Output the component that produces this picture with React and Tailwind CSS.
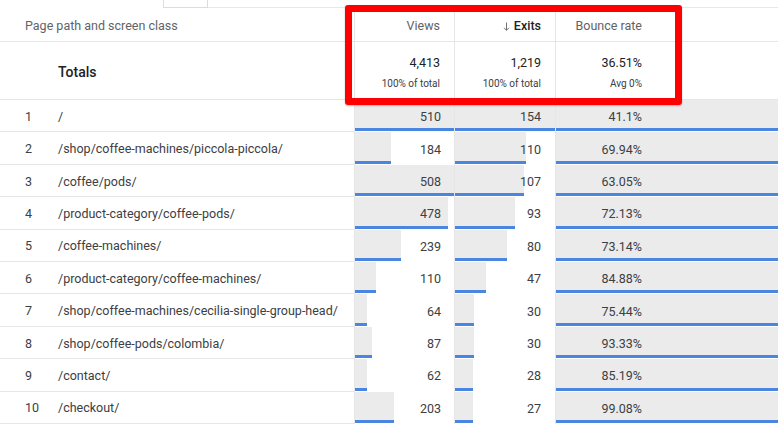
import React from "react";

const rows = [
  { n: 1, path: "/", views: 510, exits: 154, bounce: "41.1%" },
  { n: 2, path: "/shop/coffee-machines/piccola-piccola/", views: 184, exits: 110, bounce: "69.94%" },
  { n: 3, path: "/coffee/pods/", views: 508, exits: 107, bounce: "63.05%" },
  { n: 4, path: "/product-category/coffee-pods/", views: 478, exits: 93, bounce: "72.13%" },
  { n: 5, path: "/coffee-machines/", views: 239, exits: 80, bounce: "73.14%" },
  { n: 6, path: "/product-category/coffee-machines/", views: 110, exits: 47, bounce: "84.88%" },
  { n: 7, path: "/shop/coffee-machines/cecilia-single-group-head/", views: 64, exits: 30, bounce: "75.44%" },
  { n: 8, path: "/shop/coffee-pods/colombia/", views: 87, exits: 30, bounce: "93.33%" },
  { n: 9, path: "/contact/", views: 62, exits: 28, bounce: "85.19%" },
  { n: 10, path: "/checkout/", views: 203, exits: 27, bounce: "99.08%" },
];

function BarCell({ width, children, className = "" }) {
  return (
    <div className={"relative h-full " + className}>
      <div
        className="absolute left-0 top-0 bottom-[1px] bg-[#ebebeb] border-b-[3px] border-[#4a86e0]"
        style={{ width }}
      />
      <div className="relative h-full flex items-center justify-end pr-[14px] pt-[3px] w-[100px]">
        {children}
      </div>
    </div>
  );
}

export default function App() {
  return (
    <div className="relative w-[778px] h-[430px] bg-white overflow-hidden font-['Roboto',sans-serif] text-[12.5px] text-[#3c4043]">
      {/* top strip */}
      <div className="flex h-[8px]">
        <div className="w-[163px]" />
        <div className="w-[45px] border-x border-b border-[#dadce0]" />
        <div className="flex-1 border-b border-[#e8e8e8]" />
      </div>

      {/* header */}
      <div className="grid grid-cols-[355px_100px_101px_222px] h-[34px] border-b border-[#e6e6e6]">
        <div className="flex items-center pl-[25px] pt-[4px] text-[#5f6368] border-r border-[#e6e6e6]">
          Page path and screen class
        </div>
        <div className="flex items-center justify-end pr-[14px] pt-[4px] text-[#5f6368] border-r border-[#e6e6e6]">
          Views
        </div>
        <div className="flex items-center justify-end pr-[14px] pt-[4px] font-medium text-[#202124] border-r border-[#e6e6e6] gap-[4px]">
          <svg width="7" height="9" viewBox="0 0 7 9" fill="none" stroke="#5f6368" strokeWidth="0.9">
            <path d="M3.5 0.5v7.8M1 5.8l2.5 2.5 2.5-2.5" />
          </svg>
          Exits
        </div>
        <div className="flex items-center pt-[4px]">
          <div className="w-[100px] text-right pr-[14px] text-[#5f6368]">Bounce rate</div>
        </div>
      </div>

      {/* totals */}
      <div className="grid grid-cols-[355px_100px_101px_222px] h-[58px] border-b border-[#e6e6e6]">
        <div className="flex items-center pl-[58px] pt-[4px] text-[14px] font-medium text-[#202124] border-r border-[#e6e6e6]">
          Totals
        </div>
        <div className="flex flex-col items-end justify-center pr-[14px] pt-[4px] border-r border-[#e6e6e6] gap-[3px]">
          <span className="text-[#202124]">4,413</span>
          <span className="text-[10px] text-[#3c4043]">100% of total</span>
        </div>
        <div className="flex flex-col items-end justify-center pr-[14px] pt-[4px] border-r border-[#e6e6e6] gap-[3px]">
          <span className="text-[#202124]">1,219</span>
          <span className="text-[10px] text-[#3c4043]">100% of total</span>
        </div>
        <div className="flex">
          <div className="w-[100px] flex flex-col items-end justify-center pr-[14px] pt-[4px] gap-[3px]">
            <span className="text-[#202124]">36.51%</span>
            <span className="text-[10px] text-[#3c4043]">Avg 0%</span>
          </div>
        </div>
      </div>

      {/* rows */}
      {rows.map((r) => (
        <div key={r.n} className="grid grid-cols-[355px_100px_101px_222px] h-[32.4px]">
          <div className="flex items-center border-r border-b border-[#e6e6e6] pt-[3px]">
            <span className="w-[58px] pl-[25px]">{r.n}</span>
            <span>{r.path}</span>
          </div>
          <BarCell width={(r.views / 510) * 99} className="border-r border-[#e6e6e6]">
            {r.views}
          </BarCell>
          <BarCell width={(r.exits / 154) * 100} className="border-r border-[#e6e6e6]">
            {r.exits}
          </BarCell>
          <BarCell width="100%">{r.bounce}</BarCell>
        </div>
      ))}

      {/* annotation box */}
      <div className="absolute left-[345px] top-[5px] w-[337px] h-[100px] border-[7px] border-[#ff0000] rounded-[3px] shadow-[0_1px_2px_rgba(0,0,0,0.25)]" />
    </div>
  );
}
